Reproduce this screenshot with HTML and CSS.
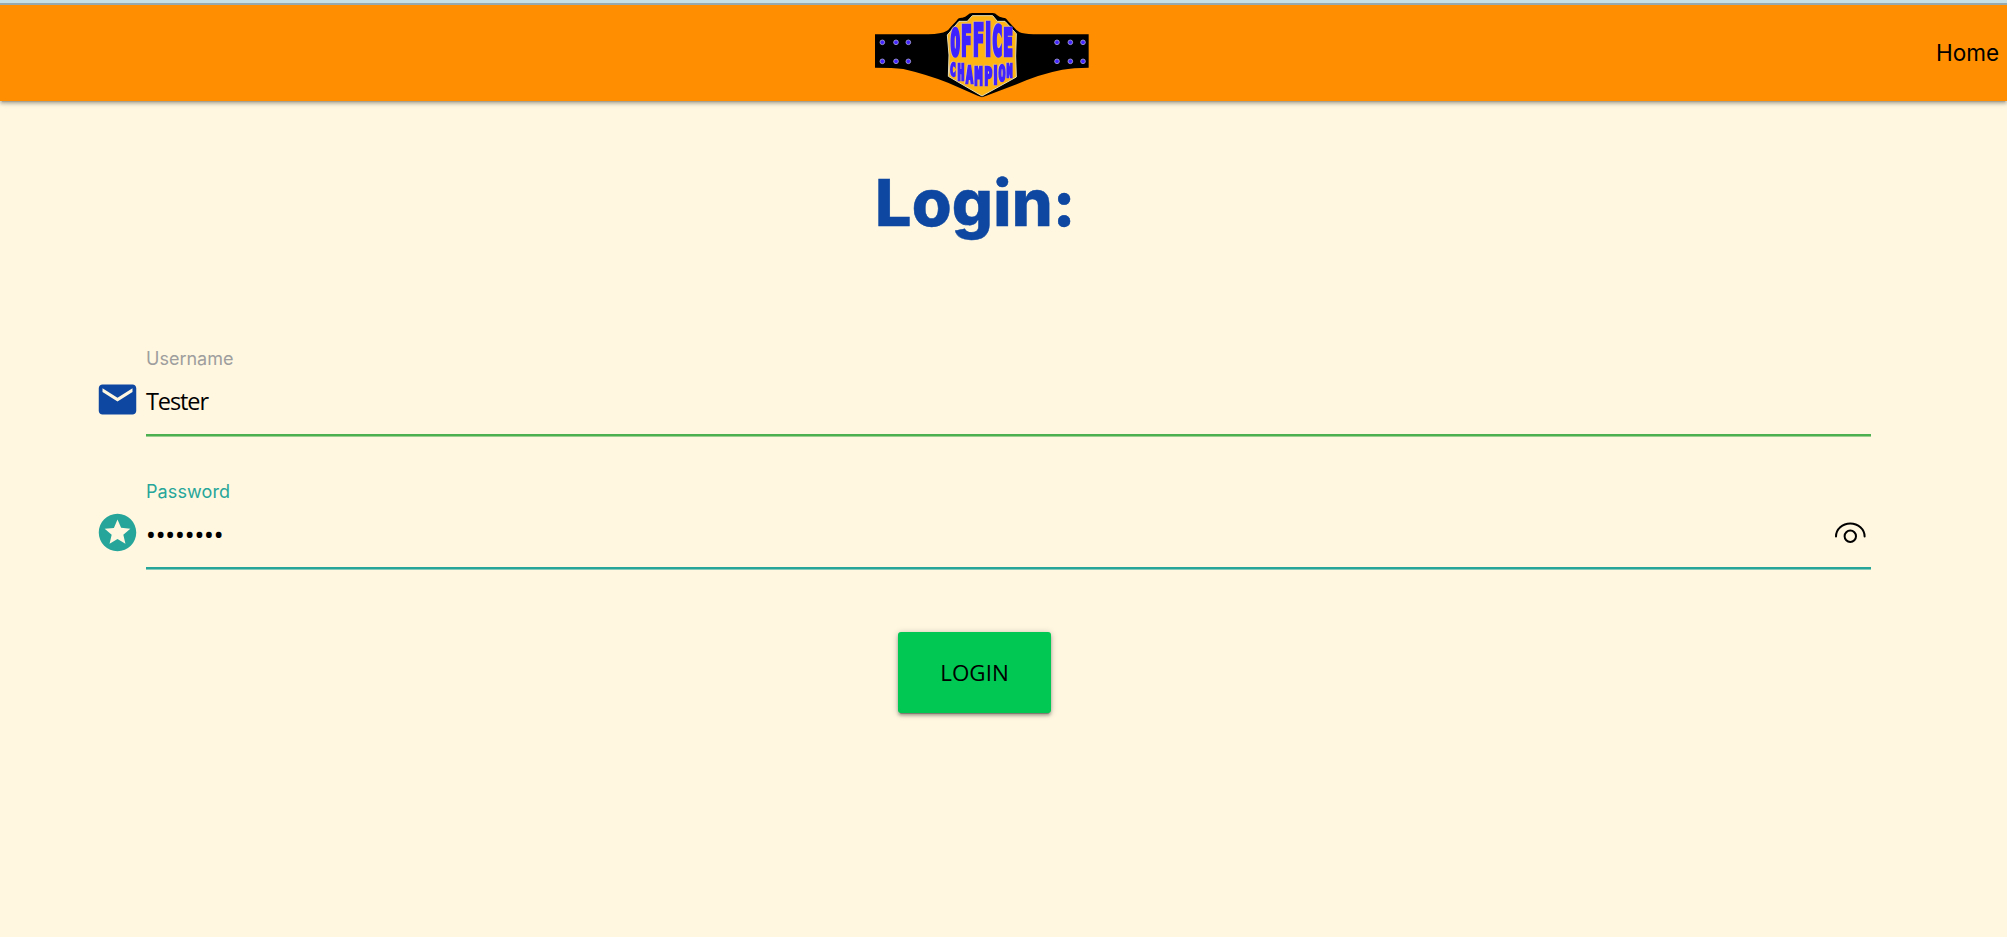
FILE: index.html
```html
<!DOCTYPE html>
<html lang="en">
<head>
<meta charset="utf-8">
<title>Office Champion</title>
<link rel="stylesheet" href="styles.css">
</head>
<body>
<nav class="nav">
  <a class="brand" href="#">
    <svg class="belt" viewBox="0 0 705 288" role="img" aria-label="Office Champion">
      <path d="M30 88H190Q230 87 243 79Q251 75 257 66L274 48Q279 37 292 38Q302 37 307 31Q313 24 322 24H383Q391 24 397 31Q402 37 414 38Q424 38 429 48L448 68Q456 77 464 82Q475 87 505 88H671V188Q625 188 592 194Q520 208 455 238L364 272L351 277L338 272L249 233Q180 207 115 192Q85 188 30 188Z"/>
      <path class="plate" d="M247 90L282 49H307L322 32H383L397 49H420L454 86L452 153L454 216L351 273L250 214L252 150Z"/>
      <g class="studs">
        <circle cx="52" cy="112" r="7"/><circle cx="93" cy="112" r="7"/><circle cx="130" cy="112" r="7"/>
        <circle cx="52" cy="169" r="7"/><circle cx="93" cy="169" r="7"/><circle cx="130" cy="169" r="7"/>
        <circle cx="576" cy="112" r="7"/><circle cx="616" cy="112" r="7"/><circle cx="654" cy="112" r="7"/>
        <circle cx="576" cy="169" r="7"/><circle cx="616" cy="169" r="7"/><circle cx="654" cy="169" r="7"/>
      </g>
      <text class="lettering large" transform="scale(.42 1)"><tspan x="613" y="149" font-size="108">O</tspan><tspan x="688" y="150" font-size="118">F</tspan><tspan x="771" y="151" font-size="128">F</tspan><tspan class="bar" x="860" y="151" font-size="136">I</tspan><tspan x="909" y="150" font-size="118">C</tspan><tspan x="990" y="149" font-size="108">E</tspan></text>
      <text class="lettering" transform="scale(.55 1)"><tspan x="463" y="213" font-size="52">C</tspan><tspan x="505" y="225" font-size="62">H</tspan><tspan x="550" y="235" font-size="67">A</tspan><tspan x="597" y="241" font-size="73">M</tspan><tspan x="650" y="241" font-size="73">P</tspan><tspan class="bar" x="701" y="236" font-size="78">I</tspan><tspan x="728" y="229" font-size="64">O</tspan><tspan x="772" y="217" font-size="55">N</tspan></text>
    </svg>
  </a>
  <a class="home" href="#">Home</a>
</nav>
<main class="page">
  <h1 class="title">Login:</h1>
  <form class="form">
    <div class="field">
      <svg class="icon" viewBox="0 0 24 24"><path d="M20 4H4c-1.100 0-1.990.9-1.990 2L2 18c0 1.100.9 2 2 2h16c1.100 0 2-.9 2-2V6c0-1.100-.9-2-2-2zm0 4l-8 5-8-5V6l8 5 8-5v2z"/></svg>
      <div class="control">
        <label class="label">Username</label>
        <div class="value">Tester</div>
      </div>
    </div>
    <div class="field active">
      <svg class="icon" viewBox="0 0 24 24"><path d="M11.990 2C6.470 2 2 6.480 2 12s4.470 10 9.990 10C17.520 22 22 17.520 22 12S17.520 2 11.990 2zm4.240 16L12 15.450 7.770 18l1.120-4.810-3.730-3.230 4.920-.42L12 5l1.920 4.530 4.920.42-3.730 3.230L16.230 18z"/></svg>
      <div class="control">
        <label class="label">Password</label>
        <div class="value"><span class="dots">••••••••</span>
          <svg class="eye" viewBox="0 0 32 24"><path d="M2 14.500a14.300 13 0 0 1 28.600 0"/><circle cx="16.300" cy="14.300" r="5.700"/></svg>
        </div>
      </div>
    </div>
    <button class="submit" type="button">LOGIN</button>
  </form>
</main>
</body>
</html>
```
FILE: styles.css
```css
* { box-sizing: border-box; }
body {
  margin: 0;
  min-height: 937px;
  background: #fff7e0;
  font-family: Inter, "Liberation Sans", sans-serif;
  border-top: 3px solid #c5dfe4;
}
.nav {
  display: grid;
  grid-template-columns: 865px 235px 1fr;
  height: 98px;
  border-top: 2px solid #98a9ae;
  background: #ff8f00;
  box-shadow: 0 3px 3px rgba(0,0,0,.16), 0 3px 1px -2px rgba(0,0,0,.12), 0 1px 6px rgba(0,0,0,.22);
}
.brand { grid-column: 2; }
.belt { display: block; width: 235px; height: 96px; }
.plate { fill: #ffb414; stroke: #e6ddb0; stroke-width: 3; }
.studs { fill: #4326ff; stroke: #a6a0d8; stroke-width: 2.5; }
.lettering {
  fill: #3f22ff;
  stroke: #3f22ff;
  stroke-width: 7;
  font-family: "DejaVu Sans Mono", monospace;
  font-weight: 700;
  filter: drop-shadow(-4px -1px 0 #ddd0c8);
}
.large { stroke-width: 13; }
.bar { font-family: "Liberation Sans", sans-serif; }
.home {
  justify-self: end;
  padding: 0 8px 0 0;
  color: #000;
  font-size: 22.5px;
  line-height: 96px;
  text-decoration: none;
}
.title {
  margin: 0;
  padding: 63px 0 1px 875px;
  color: #0d47a1;
  font-size: 64.5px;
  font-weight: 800;
  letter-spacing: 0.2px;
  line-height: 78px;
  -webkit-text-stroke: 0.5px #0d47a1;
}
.form {
  display: flex;
  flex-direction: column;
  padding: 103px 136px 0 95px;
}
.field { display: flex; height: 133px; color: #0d47a1; }
.active { color: #26a69a; }
.icon { width: 45px; height: 45px; margin: 31px 6px 0 0; fill: currentColor; }
.control { flex: 1; }
.label { display: block; height: 26px; color: #9e9e9e; font-size: 18px; line-height: 26px; }
.active .label { color: #26a69a; letter-spacing: 0.1px; }
.value {
  display: flex;
  justify-content: space-between;
  align-items: center;
  height: 64px;
  padding-bottom: 3px;
  border-bottom: 2px solid #4caf50;
  box-shadow: 0 1px 0 rgba(76,175,80,.55);
  color: #000;
  font: 23.5px/59px "Open Sans", "Noto Sans", sans-serif;
  letter-spacing: -1.1px;
}
.active .value { border-color: #26a69a; box-shadow: 0 1px 0 rgba(38,166,154,.55); }
.dots { font-family: "Noto Sans", sans-serif; font-size: 26px; letter-spacing: -0.1px; }
.eye { width: 32px; height: 24px; margin: 0 5px 2px 0; fill: none; stroke: #000; stroke-width: 2; stroke-linecap: round; }
.submit {
  width: 153px;
  height: 81px;
  margin: 20px 0 0 803px;
  padding: 0;
  border: 0;
  border-radius: 3px;
  background: #00c853;
  color: #000;
  font: 22.4px "Open Sans", "Noto Sans", sans-serif;
  box-shadow: 0 3px 3px rgba(0,0,0,.2), 0 3px 1px -2px rgba(0,0,0,.3), 0 1px 6px rgba(0,0,0,.25);
}
```
